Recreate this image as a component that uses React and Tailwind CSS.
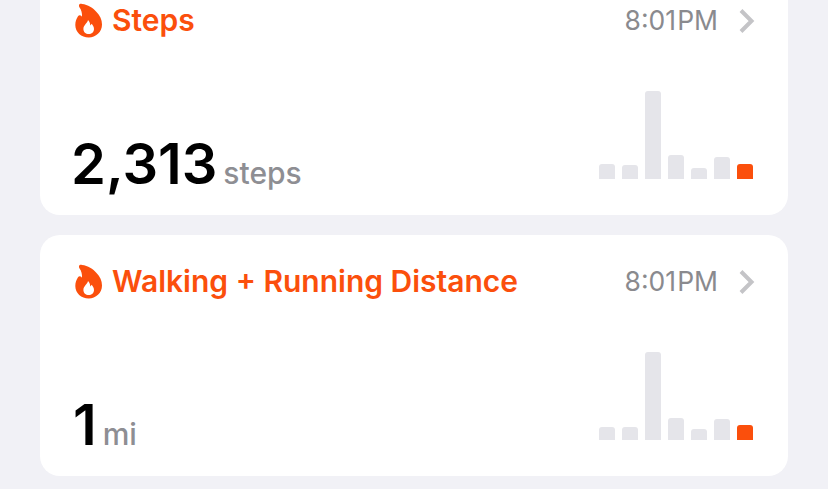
function Flame() {
  return (
    <svg width="28" height="35" viewBox="0 0 28 35" className="shrink-0">
      <path
        fillRule="evenodd"
        fill="#fb4f0c"
        d="M4 2.2C4.3 1 5.5 0.6 7 0.9C13 1.6 18 4.5 21.5 9C25 12.5 27 16.5 27 21.5C27 29 20.8 34.5 13.8 34.5C6.2 34.5 0.3 29 0.3 22C0.3 18.5 1.4 15.6 3 13.2C3.8 12.1 5.5 12 6.4 13.1L7 13.8C7.3 10.2 6.4 6.8 4.4 4.2C4 3.7 3.9 2.9 4 2.2ZM13 17C12.8 19.8 8.4 22 8.4 26C8.4 29 10.8 31 13.7 31C16.6 31 19 29 19 26C19 23.6 17.6 22.2 16.6 20.8C16.2 21.6 15.8 22.2 15.2 22.6C15.4 20.8 14.6 18.4 13 17Z"
      />
    </svg>
  );
}

function Card({ title, value, unit, heights, valueClass }) {
  return (
    <div className="h-[241px] w-[748px] rounded-[20px] bg-white flex flex-col pl-[35px] pr-[33px]">
      <div className="flex items-center h-[35px] mt-[29px]">
        <Flame />
        <span className="ml-[9px] text-[30px] leading-[35px] font-semibold text-[#fb4f0c]">{title}</span>
        <span className="ml-auto text-[26.5px] leading-[35px] text-[#8a8a8e]">8:01<span className="ml-[1px]">PM</span></span>
        <svg width="17" height="26" viewBox="0 0 17 26" className="ml-[20px]">
          <path d="M3 2.5 L13.5 13 L3 23.5" fill="none" stroke="#c4c4c7" strokeWidth="4" />
        </svg>
      </div>
      <div className="mt-auto mb-[36px] mr-[2px] flex items-end justify-between">
        <div className={`flex items-baseline leading-none -mb-[13px] ${valueClass}`}>
          <span className="text-[56px] font-semibold text-black">{value}</span>
          <span className="ml-[6px] text-[30px] font-medium text-[#8e8e93]">{unit}</span>
        </div>
        <div className="flex items-end gap-[7px]">
          {heights.map((h, i) => (
            <div
              key={i}
              style={{ height: h }}
              className={`w-[16px] rounded-t-[3px] ${i === 6 ? "bg-[#fb4f0c]" : "bg-[#e5e5ea]"}`}
            />
          ))}
        </div>
      </div>
    </div>
  );
}

export default function App() {
  return (
    <div className="h-[489px] w-[828px] overflow-hidden bg-[#f1f1f6] font-['Inter',sans-serif]">
      <div className="flex flex-col items-center gap-[20px] -mt-[26px]">
        <Card title="Steps" value="2,313" unit="steps" valueClass="-ml-[4px]" heights={[15, 14, 88, 24, 11, 22, 15]} />
        <Card title="Walking + Running Distance" value="1" unit="mi" valueClass="-ml-[2px]" heights={[13, 13, 88, 22, 11, 21, 15]} />
      </div>
    </div>
  );
}
